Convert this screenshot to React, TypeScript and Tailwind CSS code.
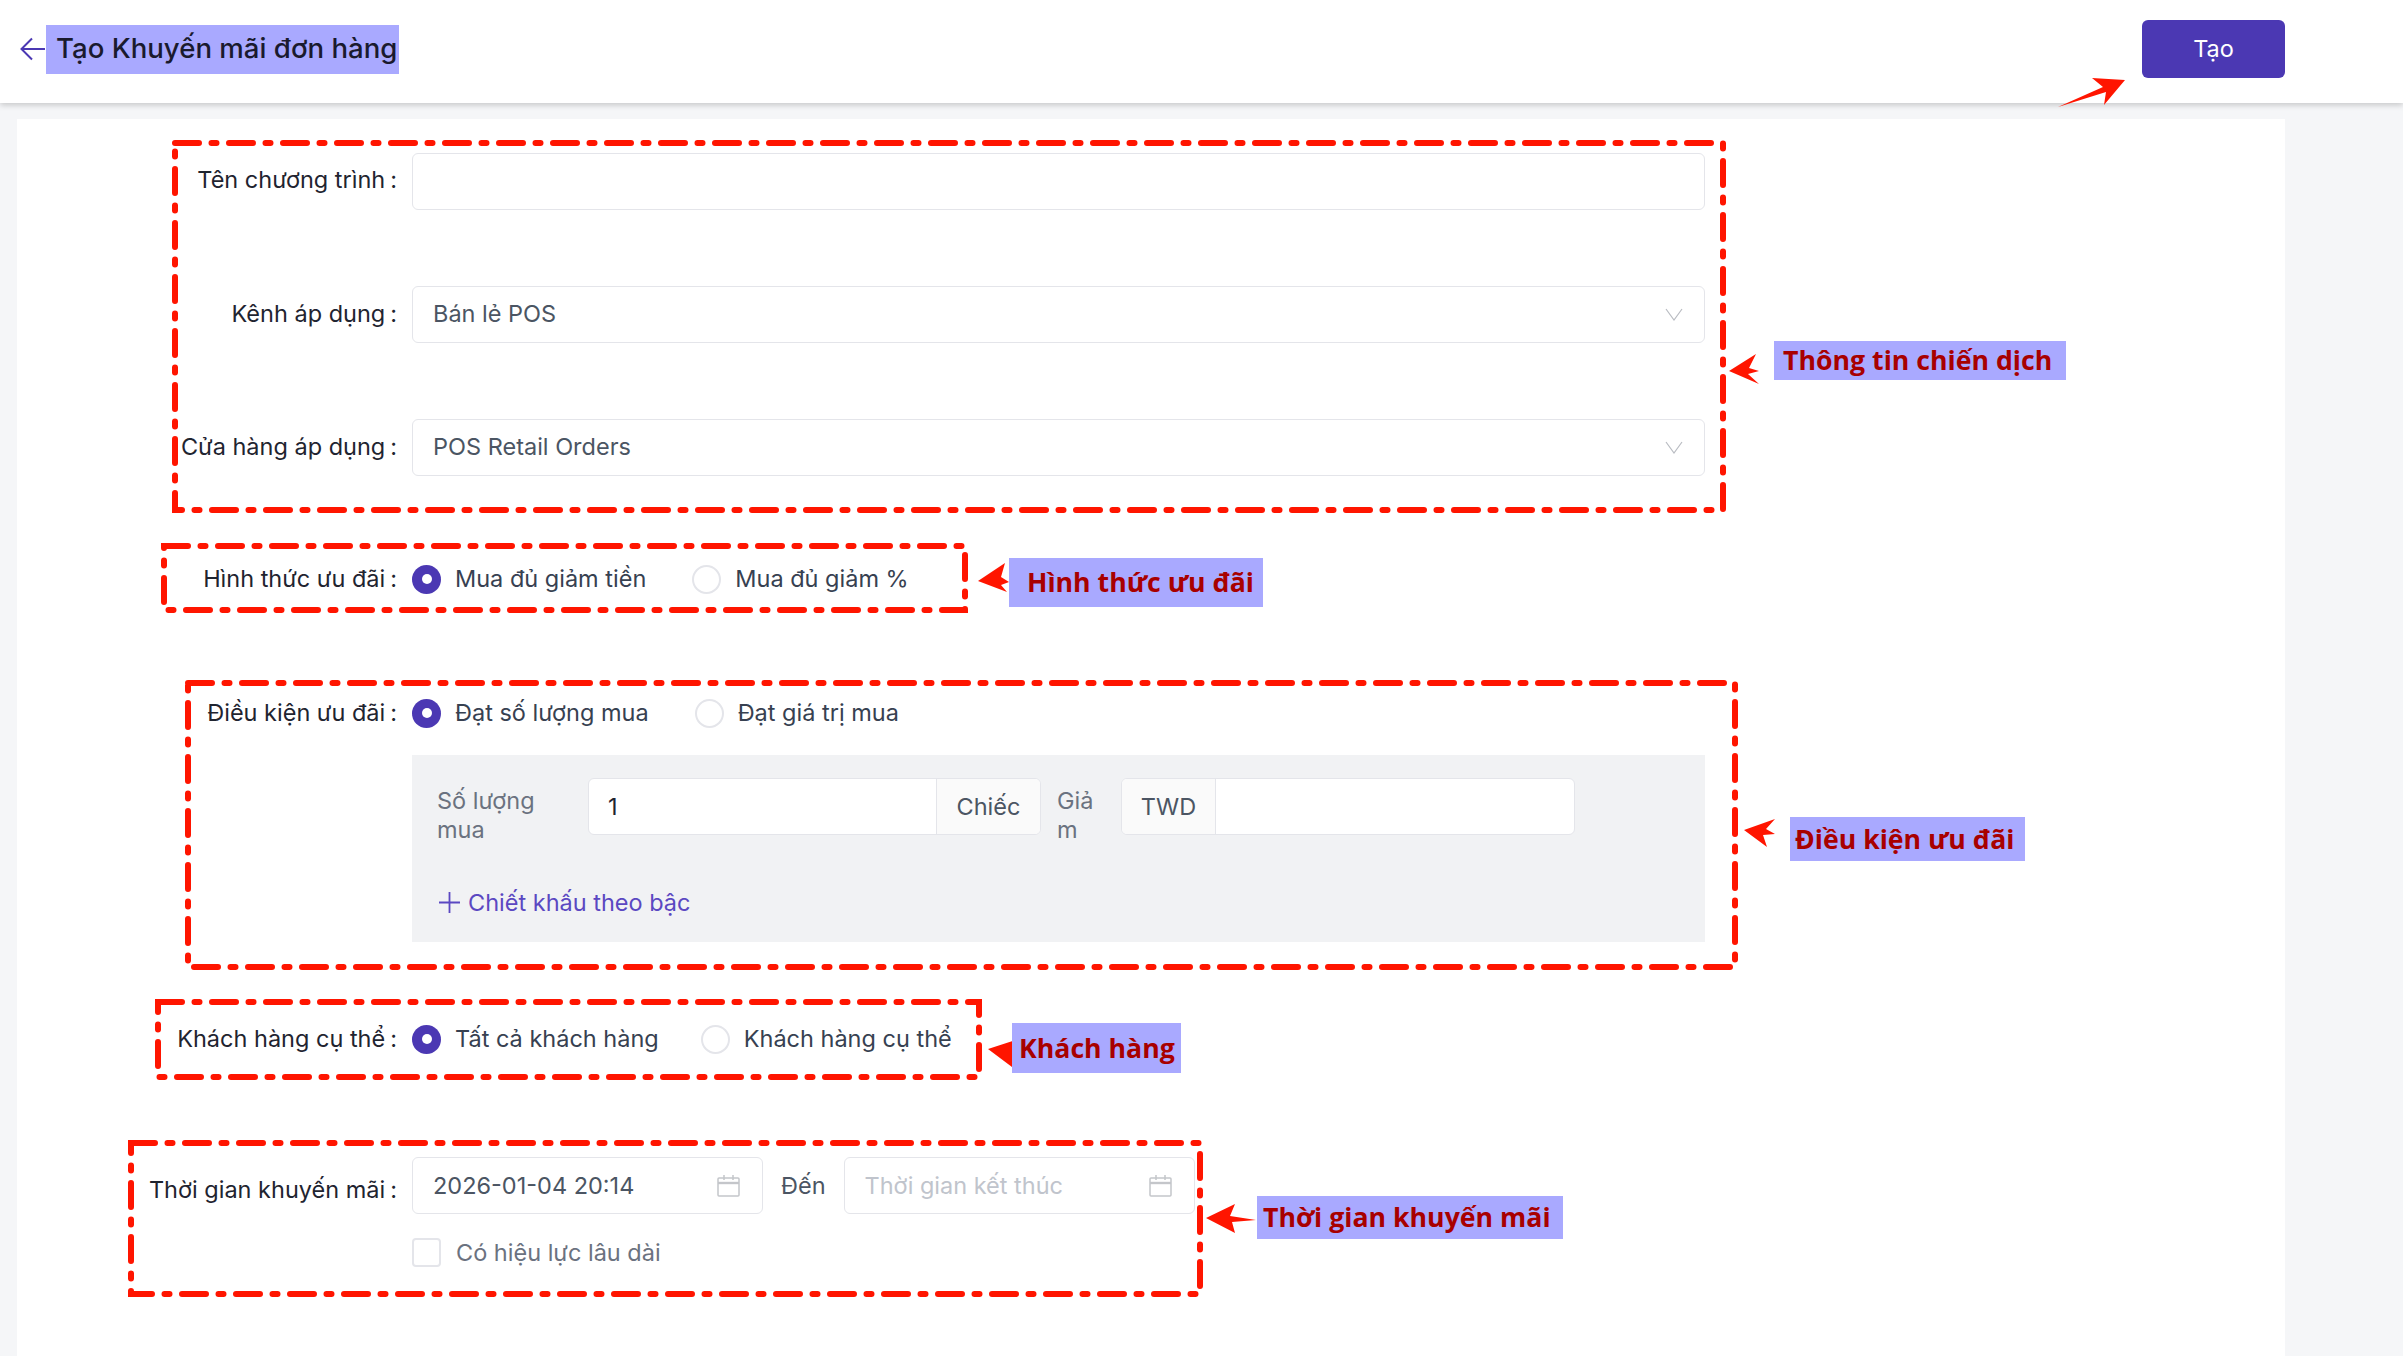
import type { ReactNode } from "react"

const sans = "font-['Inter','Noto_Sans',sans-serif]"

function Field({ label, children, className = "", labelClass = "" }: { label: string; children: ReactNode; className?: string; labelClass?: string }) {
  return (
    <div className={`flex items-center ${className}`}>
      <label className={`flex w-[395px] shrink-0 justify-end pr-[15px] text-[23.5px] whitespace-nowrap text-[#1f2430] ${labelClass}`}>
        {label}
        <span className="ml-[5px]">:</span>
      </label>
      {children}
    </div>
  )
}

function Chevron() {
  return (
    <svg width="18" height="13" viewBox="0 0 18 13" fill="none" stroke="#b9bcc2" strokeWidth="1.200" className="shrink-0">
      <path d="M1 1l8 11 8-11" />
    </svg>
  )
}

function CalendarIcon() {
  return (
    <svg width="23" height="23" viewBox="0 0 23 23" fill="none" stroke="#c4c6ca" strokeWidth="1.5" className="shrink-0">
      <rect x="1" y="4" width="21" height="18" rx="1" />
      <path d="M1 9h21" strokeWidth="2.4" />
      <path d="M7 1v5M16 1v5" />
    </svg>
  )
}

function Select({ value }: { value: string }) {
  return (
    <div className="flex h-[57px] flex-1 items-center justify-between rounded-[6px] border border-[#e4e5ea] bg-white pr-[21px] pl-[20px] text-[23.5px] text-[#4b5563]">
      <span className="pb-[2px]">{value}</span>
      <Chevron />
    </div>
  )
}

function Radio({ checked, label, className = "" }: { checked?: boolean; label: string; className?: string }) {
  return (
    <div className={`flex items-center gap-[14px] ${className}`}>
      {checked ? (
        <span className="grid h-[29px] w-[29px] place-items-center rounded-full bg-[#4b38b3]">
          <span className="h-[10px] w-[10px] rounded-full bg-white" />
        </span>
      ) : (
        <span className="h-[29px] w-[29px] rounded-full border-2 border-[#e4e5ea] bg-white" />
      )}
      <span className="text-[23.5px] whitespace-nowrap text-[#374151]">{label}</span>
    </div>
  )
}

function DateInput({ value, placeholder }: { value?: string; placeholder?: string }) {
  return (
    <div className="flex h-[57px] w-[351px] items-center justify-between rounded-[6px] border border-[#e4e5ea] bg-white pr-[22px] pl-[20px] text-[23.5px]">
      <span className={value ? "text-[#4b5563]" : "text-[#c0c4cc]"}>{value ?? placeholder}</span>
      <CalendarIcon />
    </div>
  )
}

const boxes = [
  { x: 175, y: 143, w: 1548, h: 367 },
  { x: 164, y: 546, w: 801, h: 64 },
  { x: 188, y: 683, w: 1547, h: 284 },
  { x: 158, y: 1002, w: 821, h: 75 },
  { x: 131, y: 1143, w: 1069, h: 151 },
]

const arrows = [
  "2058,107 2103,87 2092,78 2125,80 2104,105 2106,92",
  "1729,371 1756,354 1749,368 1759,371 1748,374 1759,384",
  "978,581 1005,563 1001,577 1009,582 1001,585 1007,592",
  "1744,830 1775,819 1766,829 1775,834 1763,835 1767,847",
  "988,1049 1019,1039 1012,1050 1012,1067",
  "1206,1218 1235,1204 1230,1216 1256,1220 1232,1222 1235,1233",
]

const callouts = [
  { text: "Thông tin chiến dịch", cls: "left-[1774px] top-[341px] h-[39px] w-[292px] pl-[9px]" },
  { text: "Hình thức ưu đãi", cls: "left-[1009px] top-[558px] h-[49px] w-[254px] pl-[18px]" },
  { text: "Điều kiện ưu đãi", cls: "left-[1790px] top-[817px] h-[44px] w-[235px] pl-[5px]" },
  { text: "Khách hàng", cls: "left-[1012px] top-[1023px] h-[50px] w-[169px] pl-[7px]" },
  { text: "Thời gian khuyến mãi", cls: "left-[1257px] top-[1196px] h-[43px] w-[306px] pl-[6px]" },
]

export default function App() {
  return (
    <div className={`relative h-[1356px] w-[2403px] overflow-hidden bg-[#f5f6f8] ${sans}`}>
      <header className="relative z-10 flex h-[103px] items-center justify-between bg-white pr-[118px] pb-[5px] pl-[20px] shadow-[0_2px_6px_rgba(0,0,0,0.2)]">
        <div className="flex items-center">
          <svg width="26" height="24" viewBox="0 0 26 24" fill="none" stroke="#4b38b3" strokeWidth="2">
            <path d="M25 12H2M12 1.500L1.500 12 12 22.500" />
          </svg>
          <h1 className="flex h-[49px] w-[353px] items-center bg-[#a9a9ff] pl-[10px] text-[27.6px] font-medium whitespace-nowrap text-[#1a1a2e]">
            Tạo Khuyến mãi đơn hàng
          </h1>
        </div>
        <button className="h-[58px] w-[143px] rounded-[6px] bg-[#4b38b3] text-[23.5px] text-white">Tạo</button>
      </header>

      <main className="mt-[16px] mr-[118px] ml-[17px] h-[1300px] bg-white pt-[34px]">
        <Field label="Tên chương trình" labelClass="-translate-y-[2px]">
          <div className="h-[57px] w-[1293px] rounded-[6px] border border-[#e4e5ea] bg-white" />
        </Field>
        <Field label="Kênh áp dụng" className="mt-[76px] w-[1688px]" labelClass="-translate-y-[1px]">
          <Select value="Bán lẻ POS" />
        </Field>
        <Field label="Cửa hàng áp dụng" className="mt-[76px] w-[1688px]" labelClass="-translate-y-[1px]">
          <Select value="POS Retail Orders" />
        </Field>

        <Field label="Hình thức ưu đãi" className="mt-[83px] h-[40px]">
          <Radio checked label="Mua đủ giảm tiền" />
          <Radio label="Mua đủ giảm %" className="ml-[46px]" />
        </Field>

        <Field label="Điều kiện ưu đãi" className="mt-[94px] h-[40px]">
          <Radio checked label="Đạt số lượng mua" />
          <Radio label="Đạt giá trị mua" className="ml-[46px]" />
        </Field>

        <div className="mt-[22px] ml-[395px] h-[187px] w-[1293px] bg-[#f1f2f4] pt-[23px] pl-[25px]">
          <div className="flex items-start text-[23.5px] leading-[29px] text-[#6b7280]">
            <span className="w-[151px] shrink-0 pt-[8px] pr-[40px]">Số lượng mua</span>
            <div className="flex h-[57px] w-[453px] overflow-hidden rounded-[6px] border border-[#e4e5ea] bg-white">
              <span className="flex flex-1 items-center pl-[19px] text-[#1f2430]">1</span>
              <span className="flex w-[104px] items-center justify-center border-l border-[#e4e5ea] bg-[#fafafa] text-[#4b5563]">
                Chiếc
              </span>
            </div>
            <span className="ml-[16px] w-[64px] shrink-0 pt-[8px] pr-[16px] break-all">Giảm</span>
            <div className="flex h-[57px] w-[454px] overflow-hidden rounded-[6px] border border-[#e4e5ea] bg-white">
              <span className="flex w-[94px] items-center justify-center border-r border-[#e4e5ea] bg-[#fafafa] text-[#4b5563]">
                TWD
              </span>
            </div>
          </div>
          <div className="mt-[41px] flex items-center gap-[8px] pl-[2px] text-[23.5px] text-[#5b48c2]">
            <svg width="21" height="21" viewBox="0 0 21 21" fill="none" stroke="#5b48c2" strokeWidth="1.800">
              <path d="M10.500 0v21M0 10.500h21" />
            </svg>
            Chiết khấu theo bậc
          </div>
        </div>

        <Field label="Khách hàng cụ thể" className="mt-[77px] h-[40px]">
          <Radio checked label="Tất cả khách hàng" />
          <Radio label="Khách hàng cụ thể" className="ml-[42px]" />
        </Field>

        <Field label="Thời gian khuyến mãi" className="mt-[98px]" labelClass="translate-y-[4px]">
          <DateInput value="2026-01-04 20:14" />
          <span className="mx-[18px] text-[23.5px] text-[#4b5563]">Đến</span>
          <DateInput placeholder="Thời gian kết thúc" />
        </Field>

        <div className="mt-[21px] ml-[395px] flex items-center gap-[15px]">
          <span className="h-[29px] w-[29px] rounded-[4px] border-2 border-[#e4e5ea] bg-white" />
          <span className="text-[23.5px] text-[#6b7280]">Có hiệu lực lâu dài</span>
        </div>
      </main>

      {/* annotation layer drawn on top of the screenshot */}
      <svg className="absolute top-0 left-0 z-20" width="2403" height="1356" fill="none">
        {boxes.map((b) => (
          <rect
            key={b.y}
            x={b.x}
            y={b.y}
            width={b.w}
            height={b.h}
            stroke="#ff1500"
            strokeWidth="6"
            strokeLinecap="round"
            strokeDasharray="24 12.500 5 12.500"
          />
        ))}
        {arrows.map((p) => (
          <polygon key={p} points={p} fill="#ff1500" />
        ))}
      </svg>

      {callouts.map((c) => (
        <div
          key={c.text}
          className={`absolute z-20 flex items-center bg-[#a9a9ff] font-['Open_Sans',sans-serif] text-[26.7px] font-bold whitespace-nowrap text-[#a80000] ${c.cls}`}
        >
          {c.text}
        </div>
      ))}
    </div>
  )
}
